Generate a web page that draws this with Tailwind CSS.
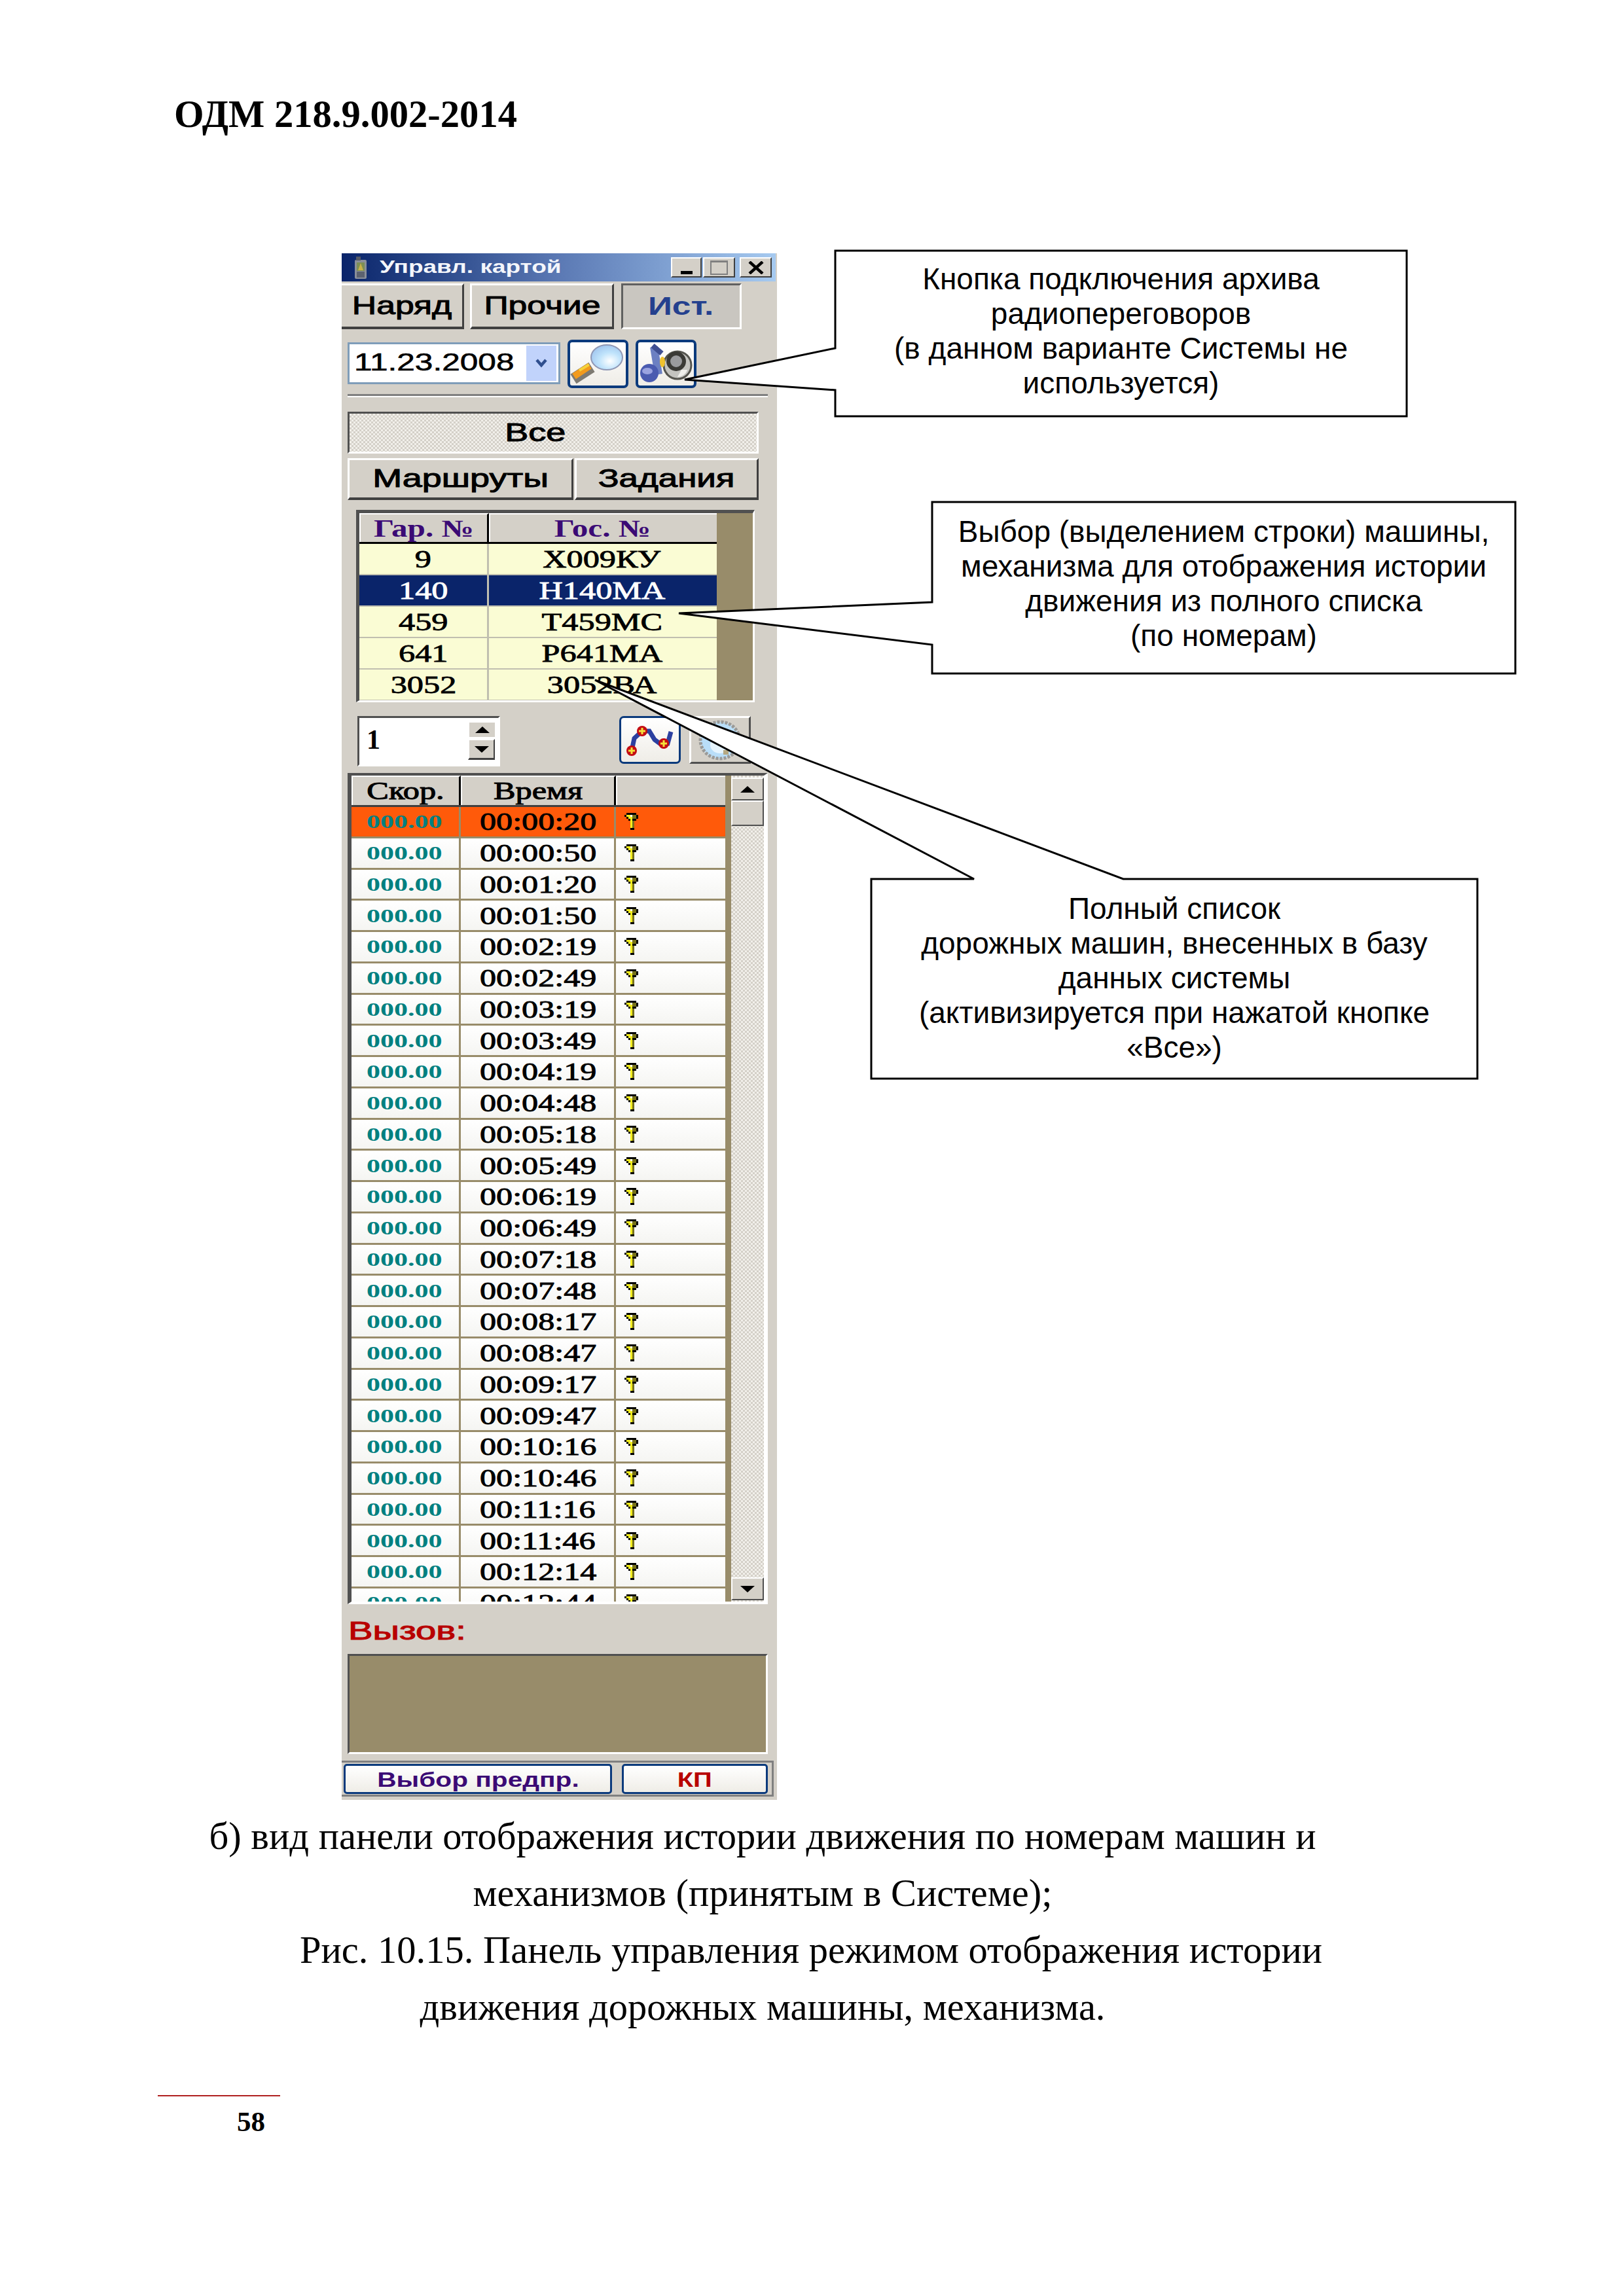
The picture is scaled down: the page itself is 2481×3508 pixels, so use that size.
<!DOCTYPE html>
<html lang="ru">
  <head>
    <meta charset="UTF-8" />
    <title>ОДМ 218.9.002-2014</title>
    <script src="https://cdn.jsdelivr.net/npm/@tailwindcss/browser@4"></script>
  </head>
  <body class="bg-white text-black [font-family:'Liberation_Serif',serif]">
    <div class="relative w-[2481px] h-[3508px] overflow-hidden">
      <p class="ml-[266px] pt-[142px] font-bold text-[58.6px] leading-[66px]">ОДМ 218.9.002-2014</p>

      <!-- панель -->
      <div class="ml-[522px] mt-[179px] w-[665px] h-[2363px] bg-[#d4d0c8] flex flex-col [font-family:'Liberation_Sans',sans-serif]">
        <div class="h-[43px] w-[663px] flex items-center bg-gradient-to-r from-[#0a246a] via-[#5b79b4] to-[#a6caf0]">
          <svg class="ml-[17px]" width="24" height="36" viewBox="0 0 24 36">
            <rect x="3" y="6" width="18" height="29" rx="2" fill="#8a8f9a" />
            <rect x="5" y="1" width="7" height="6" fill="#555a66" />
            <rect x="6" y="10" width="12" height="13" fill="#7d8f55" />
            <path d="M12 11l4 11H8z" fill="#c9b24a" />
            <rect x="6" y="24" width="12" height="9" fill="#5c6270" />
          </svg>
          <span class="ml-[17px] inline-block origin-left scale-x-[1.37] text-[#f4f6fb] font-bold text-[27px] leading-none">Управл. картой</span>
          <div class="ml-auto mr-[6px] flex">
            <div class="w-[47px] h-[31px] bg-[#d4d0c8] border-2 border-t-white border-l-white border-r-[#404040] border-b-[#404040] flex items-end justify-center pb-[3px]"><div class="w-[18px] h-[5px] bg-black"></div></div>
            <div class="ml-[2px] w-[49px] h-[31px] bg-[#d4d0c8] border-2 border-t-white border-l-white border-r-[#404040] border-b-[#404040] flex items-center justify-center"><div class="w-[27px] h-[22px] border-2 border-t-[3px] border-[#808080]"></div></div>
            <div class="ml-[7px] w-[49px] h-[31px] bg-[#d4d0c8] border-2 border-t-white border-l-white border-r-[#404040] border-b-[#404040] flex items-center justify-center">
              <svg width="26" height="20" viewBox="0 0 26 20"><path d="M3 1l20 18M23 1L3 19" stroke="#000" stroke-width="4.5" /></svg>
            </div>
          </div>
        </div>

        <div class="mt-[3px] h-[70px] flex text-[38px] [-webkit-text-stroke:1px_#000]">
          <div class="w-[187px] border-b-[4px] border-r-[3px] border-t-[3px] border-t-white border-r-[#404040] border-b-[#404040] flex items-center justify-center"><span class="inline-block scale-x-[1.36]">Наряд</span></div>
          <div class="ml-[9px] w-[220px] border-[3px] border-b-[4px] border-t-white border-l-white border-r-[#404040] border-b-[#404040] flex items-center justify-center"><span class="inline-block scale-x-[1.36]">Прочие</span></div>
          <div class="ml-[11px] w-[184px] border-[3px] border-b-[3px] border-t-[#606060] border-l-[#606060] border-r-white border-b-white bg-[#c9c6c0] text-[#24408e] font-bold flex items-center justify-center [-webkit-text-stroke:0] pr-[2px]"><span class="inline-block scale-x-[1.35]">Ист.</span></div>
        </div>

        <div class="mt-[16px] h-[74px] pl-[9px] flex">
          <div class="mt-[4px] w-[325px] h-[64px] bg-white border-[3px] border-[#7f9db9] flex items-center pr-[3px]">
            <span class="ml-[7px] mb-[4px] inline-block origin-left scale-x-[1.34] text-[37px] leading-none [-webkit-text-stroke:0.6px_#000]">11.23.2008</span>
            <div class="ml-auto w-[46px] h-[54px] bg-[#c1d3fb] flex items-center justify-center">
              <svg width="18" height="14" viewBox="0 0 18 14"><path d="M2 2l7 8 7-8" fill="none" stroke="#2f4f8f" stroke-width="4.5" /></svg>
            </div>
          </div>
          <div class="ml-[11px] w-[93px] h-[74px] rounded-[7px] border-[4px] border-[#0b3a7c] bg-gradient-to-b from-white to-[#efede7]">
            <svg width="85" height="66" viewBox="0 0 85 66">
              <defs><radialGradient id="lens" cx="0.6" cy="0.65" r="0.7"><stop offset="0" stop-color="#ffffff" /><stop offset="0.5" stop-color="#bfe3fb" /><stop offset="1" stop-color="#9fc4ee" /></radialGradient></defs>
              <path d="M5 56L33 38" stroke="#7d7a72" stroke-width="17" />
              <path d="M6 52L30 36" stroke="#f29a1c" stroke-width="10" />
              <path d="M14 43L29 34" stroke="#f5d23a" stroke-width="4" />
              <ellipse cx="56" cy="23" rx="24" ry="19" fill="url(#lens)" stroke="#8f97b4" stroke-width="2" />
            </svg>
          </div>
          <div class="ml-[11px] w-[93px] h-[74px] rounded-[7px] border-[4px] border-[#0b3a7c] bg-gradient-to-b from-white to-[#efede7]">
            <svg width="85" height="66" viewBox="0 0 85 66">
              <path d="M31 49L24 7" stroke="#6c80c2" stroke-width="12" />
              <path d="M22 5l14 12" stroke="#3f4f92" stroke-width="8" />
              <circle cx="17" cy="47" r="14" fill="#4a5bb0" />
              <ellipse cx="14" cy="44" rx="8" ry="5" fill="#9aa3e0" />
              <circle cx="60" cy="35" r="21" fill="#c4c4c0" stroke="#55554f" stroke-width="3" />
              <circle cx="58" cy="29" r="12" fill="#9a9b9e" stroke="#3a3a36" stroke-width="6" />
              <path d="M60 53c6 0 13-4 15-11l-9 0z" fill="#efefeb" />
              <ellipse cx="37" cy="30" rx="4" ry="8" fill="#f0c22e" />
            </svg>
          </div>
        </div>

        <div class="mt-[9px] ml-[9px] w-[642px] h-[5px] bg-[#808080] border-b-2 border-white"></div>

        <div class="mt-[22px] ml-[9px] w-[628px] h-[64px] border-[3px] border-t-[#505050] border-l-[#505050] border-r-white border-b-white bg-[repeating-conic-gradient(#d4d0c8_0_25%,#f1efea_0_50%)] bg-size-[6px_6px] flex items-center justify-center pr-[54px] text-[38px] [-webkit-text-stroke:1px_#000]">
          <span class="inline-block scale-x-[1.42]">Все</span>
        </div>

        <div class="mt-[7px] ml-[9px] w-[628px] h-[64px] flex text-[38px] [-webkit-text-stroke:1px_#000]">
          <div class="w-[345px] border-[3px] border-b-[4px] border-t-white border-l-white border-r-[#404040] border-b-[#404040] flex items-center justify-center"><span class="inline-block scale-x-[1.42]">Маршруты</span></div>
          <div class="ml-[2px] w-[281px] border-[3px] border-b-[4px] border-t-white border-l-white border-r-[#404040] border-b-[#404040] flex items-center justify-center"><span class="inline-block scale-x-[1.39]">Задания</span></div>
        </div>

        <!-- гаражные номера -->
        <div class="mt-[15px] ml-[22px] w-[609px] h-[294px] border-[3px] border-t-[5px] border-l-[5px] border-t-[#505050] border-l-[#505050] border-r-white border-b-white bg-[#988c6a] overflow-hidden [font-family:'Liberation_Serif',serif]">
          <div class="w-[546px] h-[47px] flex border-b-[3px] border-black text-[#3b0a75] font-bold text-[37px] leading-none">
            <div class="w-[198px] border-t-2 border-l-2 border-t-white border-l-white border-r-[3px] border-r-black bg-[#d4d0c8] flex items-center justify-center"><span class="inline-block scale-x-[1.33]">Гар. №</span></div>
            <div class="w-[348px] border-t-2 border-l-2 border-t-white border-l-white bg-[#d4d0c8] flex items-center justify-center pr-[3px]"><span class="inline-block scale-x-[1.33]">Гос. №</span></div>
          </div>
          <div id="garage" class="w-[546px] text-[37px] leading-none"></div>
        </div>

        <div class="mt-[21px] ml-[24px] h-[77px] flex">
          <div class="w-[218px] h-[77px] border-[3px] border-t-[#505050] border-l-[#505050] border-r-white border-b-white bg-white flex">
            <span class="ml-[11px] mt-[12px] font-bold text-[42px] leading-none [font-family:'Liberation_Serif',serif]">1</span>
            <div class="ml-auto mr-[5px] mt-[5px] w-[41px] flex flex-col">
              <div class="h-[24px] bg-[#d4d0c8] border-t-2 border-l-2 border-t-white border-l-white flex items-center justify-center"><svg width="22" height="10" viewBox="0 0 22 10"><path d="M11 0l11 10H0z" /></svg></div>
              <div class="mt-[3px] h-[32px] bg-[#d4d0c8] border-t-2 border-l-2 border-b-[3px] border-r-2 border-t-white border-l-white border-b-[#404040] border-r-[#404040] flex items-center justify-center"><svg width="22" height="10" viewBox="0 0 22 10"><path d="M0 0h22L11 10z" /></svg></div>
            </div>
          </div>
          <div class="ml-[182px] w-[94px] h-[73px] rounded-[7px] border-[3px] border-[#0b3a7c] bg-gradient-to-b from-white to-[#efede7]">
            <svg width="88" height="67" viewBox="0 0 88 67">
              <path d="M16 50L20 31L32 20H43L51 33L59 39H71L76 21" fill="none" stroke="#2b40a0" stroke-width="7" />
              <g fill="#c40d12"><circle cx="16" cy="50" r="8" /><circle cx="32" cy="20" r="8" /><circle cx="65" cy="39" r="8" /></g>
              <path d="M16 45v10M11 50h10M32 15v10M27 20h10M65 34v10M60 39h10" stroke="#f4e23a" stroke-width="3" />
            </svg>
          </div>
          <div class="ml-[13px] w-[94px] h-[73px] border-[3px] border-t-white border-l-white border-r-[#505050] border-b-[#505050] flex items-center justify-center">
            <svg width="66" height="62" viewBox="0 0 66 62">
              <ellipse cx="33" cy="31" rx="30" ry="28" fill="#b9def8" stroke="#9a9a98" stroke-width="5" stroke-dasharray="4 2" />
              <ellipse cx="33" cy="38" rx="15" ry="13" fill="#e6f4fd" />
              <rect x="38" y="46" width="8" height="7" fill="#b5a882" />
            </svg>
          </div>
        </div>

        <!-- история -->
        <div class="mt-[10px] ml-[9px] w-[642px] h-[1270px] border-[4px] border-l-[6px] border-r-[6px] border-t-[#505050] border-l-[#505050] border-r-white border-b-white bg-[#988c6a] flex overflow-hidden [font-family:'Liberation_Serif',serif]">
          <div class="w-[571px] h-[1262px] overflow-hidden">
            <div class="h-[48px] flex text-[37px] leading-none border-b-[3px] border-[#404040] [-webkit-text-stroke:1px_#000]">
              <div class="w-[167px] bg-[#d4d0c8] border-t-2 border-l-2 border-t-white border-l-white border-r-[3px] border-r-black flex items-center justify-center"><span class="inline-block scale-x-[1.36]">Скор.</span></div>
              <div class="w-[237px] bg-[#d4d0c8] border-t-2 border-l-2 border-t-white border-l-white border-r-[3px] border-r-black flex items-center justify-center"><span class="inline-block scale-x-[1.36]">Время</span></div>
              <div class="w-[167px] bg-[#d4d0c8] border-t-2 border-l-2 border-t-white border-l-white"></div>
            </div>
            <div id="history"></div>
          </div>
          <div class="ml-[9px] w-[50px] h-[1262px] flex flex-col bg-[repeating-conic-gradient(#d4d0c8_0_25%,#f1efea_0_50%)] bg-size-[6px_6px]">
            <div class="mt-[3px] h-[35px] bg-[#d4d0c8] border-2 border-t-white border-l-white border-r-[#505050] border-b-[#505050] flex items-center justify-center"><svg width="22" height="10" viewBox="0 0 22 10"><path d="M11 0l11 10H0z" /></svg></div>
            <div class="h-[39px] bg-[#d4d0c8] border-2 border-t-white border-l-white border-r-[#505050] border-b-[#505050]"></div>
            <div class="mt-auto mb-[2px] h-[35px] bg-[#d4d0c8] border-2 border-t-white border-l-white border-r-[#505050] border-b-[#505050] flex items-center justify-center"><svg width="22" height="10" viewBox="0 0 22 10"><path d="M0 0h22L11 10z" /></svg></div>
          </div>
        </div>

        <div class="pt-[20px] pb-[14px] pl-[10px] text-[#b80000] text-[38px] leading-[42px] [-webkit-text-stroke:1px_#b80000]"><span class="inline-block origin-left scale-x-[1.48]">Вызов:</span></div>
        <div class="ml-[9px] w-[642px] h-[153px] border-[3px] border-t-[#505050] border-l-[#505050] border-r-white border-b-white bg-[#988c6a]"></div>

        <div class="mt-[10px] h-[55px] w-[660px] border-t-[3px] border-b-[3px] border-r-[3px] border-[#808080] flex font-bold text-[32px]">
          <div class="ml-[3px] w-[410px] h-[46px] mt-[2px] pt-[2px] rounded-[5px] border-[3px] border-[#0b3a7c] bg-gradient-to-b from-white to-[#efede7] text-[#3b0a75] flex items-center justify-center"><span class="inline-block scale-x-[1.27]">Выбор предпр.</span></div>
          <div class="ml-[15px] w-[223px] h-[46px] mt-[2px] pt-[2px] rounded-[5px] border-[3px] border-[#0b3a7c] bg-gradient-to-b from-white to-[#efede7] text-[#b80000] flex items-center justify-center"><span class="inline-block scale-x-[1.25]">КП</span></div>
        </div>
      </div>

      <!-- подпись -->
      <div class="w-[2330px] mt-[12px] text-center text-[58.5px] leading-[87px]">
        <p>б) вид панели отображения истории движения по номерам машин и</p>
        <p>механизмов (принятым в Системе);</p>
        <p class="pl-[148px]">Рис. 10.15. Панель управления режимом отображения истории</p>
        <p>движения дорожных машины, механизма.</p>
      </div>

      <div class="ml-[241px] mt-[91px] w-[187px] h-[2px] bg-[#b02020]"></div>
      <p class="ml-[362px] mt-[14px] font-bold text-[43px] leading-[50px]">58</p>

      <!-- выноски -->
      <svg class="absolute left-0 top-0 pointer-events-none" width="2481" height="3508" viewBox="0 0 2481 3508" fill="#fff" stroke="#000" stroke-width="3">
        <polygon points="1276,383 2149,383 2149,636 1276,636 1276,596 1046,580 1276,532" />
        <polygon points="1424,767 2315,767 2315,1029 1424,1029 1424,985 1037,937 1424,920" />
        <polygon points="1331,1343 1488,1343 909,1039 1716,1343 2257,1343 2257,1648 1331,1648" />
      </svg>
      <div class="absolute left-[1276px] top-[383px] w-[873px] h-[253px] pt-[17px] text-center text-[46px] leading-[53px] [font-family:'Liberation_Sans',sans-serif]">Кнопка подключения архива<br />радиопереговоров<br />(в данном варианте Системы не<br />используется)</div>
      <div class="absolute left-[1424px] top-[767px] w-[891px] h-[262px] pt-[19px] text-center text-[46px] leading-[53px] [font-family:'Liberation_Sans',sans-serif]">Выбор (выделением строки) машины,<br />механизма для отображения истории<br />движения из полного списка<br />(по номерам)</div>
      <div class="absolute left-[1331px] top-[1343px] w-[926px] h-[305px] pt-[19px] text-center text-[46px] leading-[53px] [font-family:'Liberation_Sans',sans-serif]">Полный список<br />дорожных машин, внесенных в базу<br />данных системы<br />(активизируется при нажатой кнопке<br />«Все»)</div>
    </div>

    <script>
      const garage = [
        ["9", "Х009КУ"],
        ["140", "Н140МА"],
        ["459", "Т459МС"],
        ["641", "Р641МА"],
        ["3052", "3052ВА"],
      ];
      document.getElementById("garage").innerHTML = garage
        .map((row, i) => {
          const bg = i === 1 ? "bg-[#0a246a] text-white [-webkit-text-stroke:0.8px_#fff]" : "bg-[#fafcd4] text-black [-webkit-text-stroke:0.8px_#000]";
          return `
          <div class="h-[48px] flex border-b-[2px] border-[#c0bfb0] ${bg}">
            <div class="w-[198px] border-r-[3px] border-[#c0bfb0] flex items-center justify-center"><span class="inline-block scale-x-[1.36]">${row[0]}</span></div>
            <div class="w-[348px] flex items-center justify-center pr-[3px]"><span class="inline-block scale-x-[1.36]">${row[1]}</span></div>
          </div>`;
        })
        .join("");

      const times = [
        "00:00:20", "00:00:50", "00:01:20", "00:01:50", "00:02:19", "00:02:49",
        "00:03:19", "00:03:49", "00:04:19", "00:04:48", "00:05:18", "00:05:49",
        "00:06:19", "00:06:49", "00:07:18", "00:07:48", "00:08:17", "00:08:47",
        "00:09:17", "00:09:47", "00:10:16", "00:10:46", "00:11:16", "00:11:46",
        "00:12:14", "00:12:44",
      ];
      const key = `<svg class="ml-[13px]" width="21" height="26" viewBox="0 0 7 9" shape-rendering="crispEdges">
        <path d="M1 0h5v1h1v2h-1v1h-1v5H3V4H2V3H1V2H0V1h1z" fill="#000" />
        <path d="M1 1h2v1h1v6h-1V3H2V2H1z" fill="#f5ef1e" />
        <path d="M3 1h3v2H4V2H3z" fill="#77721a" />
        <path d="M3 1h1v1H3z" fill="#fff" />
        <path d="M4 4h1v4H4z" fill="#77721a" />
      </svg>`;
      document.getElementById("history").innerHTML = times
        .map((t, i) => {
          const bg = i === 0 ? "bg-[#ff5a0a]" : "bg-gradient-to-b from-white to-[#f5f5f2]";
          return `
          <div class="h-[47.75px] flex border-b-[3px] border-[#988c6a] ${bg}">
            <div class="w-[167px] border-r-[3px] border-[#988c6a] flex items-center pl-[23px]"><span class="inline-block origin-left scale-x-[1.4] text-[#008080] font-bold text-[30px] leading-none">000.00</span></div>
            <div class="w-[237px] border-r-[3px] border-[#988c6a] flex items-center pl-[29px]"><span class="inline-block origin-left scale-x-[1.32] text-[38px] leading-none [-webkit-text-stroke:0.9px_#000]">${t}</span></div>
            <div class="w-[167px] flex items-center">${key}</div>
          </div>`;
        })
        .join("");
    </script>
  </body>
</html>
